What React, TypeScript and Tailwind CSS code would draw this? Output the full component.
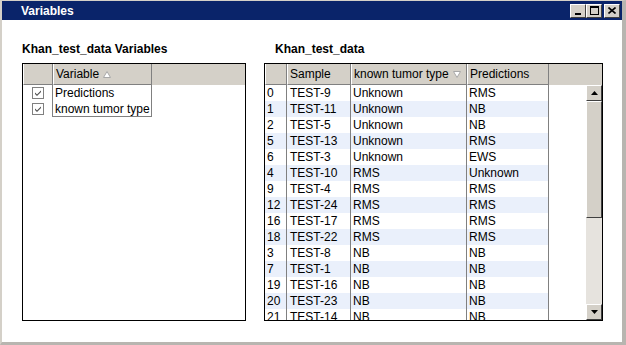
import React from "react";

const rows = [
  ["0", "TEST-9", "Unknown", "RMS"],
  ["1", "TEST-11", "Unknown", "NB"],
  ["2", "TEST-5", "Unknown", "NB"],
  ["5", "TEST-13", "Unknown", "RMS"],
  ["6", "TEST-3", "Unknown", "EWS"],
  ["4", "TEST-10", "RMS", "Unknown"],
  ["9", "TEST-4", "RMS", "RMS"],
  ["12", "TEST-24", "RMS", "RMS"],
  ["16", "TEST-17", "RMS", "RMS"],
  ["18", "TEST-22", "RMS", "RMS"],
  ["3", "TEST-8", "NB", "NB"],
  ["7", "TEST-1", "NB", "NB"],
  ["19", "TEST-16", "NB", "NB"],
  ["20", "TEST-23", "NB", "NB"],
  ["21", "TEST-14", "NB", "NB"],
];

const WinButton = ({ children, className }: { children: React.ReactNode; className?: string }) => (
  <div
    className={`flex h-[14px] w-[16px] items-center justify-center border border-t-white border-l-white border-r-[#404040] border-b-[#404040] bg-[#d4d0c8] ${className ?? ""}`}
  >
    {children}
  </div>
);

const Check = () => (
  <div className="flex h-[12px] w-[12px] items-center justify-center border border-[#808080] bg-white">
    <svg width="8" height="8" viewBox="0 0 8 8">
      <path d="M1 3.5 L3 5.5 L7 1.5 L7 3 L3 7 L1 5 Z" fill="#4a4a4a" />
    </svg>
  </div>
);

const HeadCell = ({ w, children }: { w: string; children?: React.ReactNode }) => (
  <div
    className={`${w} flex h-full shrink-0 items-center border-l border-l-white border-r border-r-[#808080] border-b border-b-[#808080] pl-[2px] text-[12px] text-black`}
  >
    {children}
  </div>
);

const ScrollBtn = ({ up }: { up?: boolean }) => (
  <div className="flex h-[16px] w-[16px] shrink-0 items-center justify-center border border-t-white border-l-white border-r-[#404040] border-b-[#404040] bg-[#d4d0c8]">
    <svg width="7" height="4" viewBox="0 0 7 4">
      {up ? <path d="M0 4 L3.5 0 L7 4 Z" fill="#000" /> : <path d="M0 0 L7 0 L3.5 4 Z" fill="#000" />}
    </svg>
  </div>
);

export default function App() {
  return (
    <div className="flex h-[345px] w-[626px] flex-col border-l-2 border-t border-r-[4px] border-b-[3px] border-l-[#d4d0c8] border-t-[#d4d0c8] border-r-[#b8b5b0] border-b-[#b8b5b0] bg-white font-['Liberation_Sans',Arial,sans-serif]">
      <div className="flex h-[19px] shrink-0 items-center justify-between bg-[#0a246a] pl-[19px] pr-[2px]">
        <span className="text-[12px] font-bold text-white">Variables</span>
        <div className="flex items-center">
          <WinButton>
            <svg width="8" height="8" viewBox="0 0 8 8">
              <rect x="1" y="6" width="6" height="2" fill="#000" />
            </svg>
          </WinButton>
          <WinButton>
            <svg width="9" height="9" viewBox="0 0 9 9">
              <rect x="0.5" y="0.5" width="8" height="8" fill="none" stroke="#000" />
              <rect x="0" y="0" width="9" height="2" fill="#000" />
            </svg>
          </WinButton>
          <WinButton className="ml-[2px]">
            <svg width="8" height="7" viewBox="0 0 8 7">
              <path d="M0.5 0.5 L7.5 6.5 M7.5 0.5 L0.5 6.5" stroke="#000" strokeWidth="1.6" />
            </svg>
          </WinButton>
        </div>
      </div>

      <div className="flex flex-1 pl-[20px] pt-[22px]">
        {/* left panel */}
        <div className="flex w-[224px] flex-col">
          <div className="h-[21px] text-[12px] font-bold leading-[14px] text-black">Khan_test_data Variables</div>
          <div className="flex h-[258px] flex-col border border-black">
            <div className="flex h-[21px] shrink-0 bg-[#d4d0c8]">
              <HeadCell w="w-[30px]" />
              <HeadCell w="w-[99px]">
                <span>Variable</span>
                <svg className="ml-[4px]" width="8" height="7" viewBox="0 0 8 7">
                  <path d="M0.5 6.5 L4 0.5 L7.5 6.5 Z" fill="#fff" stroke="#a8a8a8" />
                </svg>
              </HeadCell>
            </div>
            {["Predictions", "known tumor type"].map((v, i) => (
              <div key={v} className="flex h-[16px] shrink-0">
                <div className="flex w-[30px] items-center justify-center border-r border-[#808080]">
                  <Check />
                </div>
                <div
                  className={`flex w-[99px] items-center border-r border-[#808080] pl-[2px] text-[12px] leading-[16px] text-black ${i === 1 ? "border-b" : ""}`}
                >
                  {v}
                </div>
              </div>
            ))}
          </div>
        </div>

        {/* right panel */}
        <div className="ml-[18px] flex w-[339px] flex-col">
          <div className="ml-[11px] h-[21px] text-[12px] font-bold leading-[14px] text-black">Khan_test_data</div>
          <div className="flex h-[258px] flex-col border border-black">
            <div className="flex h-[21px] shrink-0 bg-[#d4d0c8]">
              <HeadCell w="w-[22px]" />
              <HeadCell w="w-[64px]">Sample</HeadCell>
              <HeadCell w="w-[116px]">
                <span>known tumor type</span>
                <svg className="ml-[4px]" width="8" height="7" viewBox="0 0 8 7">
                  <path d="M0.5 0.5 L7.5 0.5 L4 6.5 Z" fill="#fff" stroke="#a8a8a8" />
                </svg>
              </HeadCell>
              <HeadCell w="w-[82px]">Predictions</HeadCell>
            </div>
            <div className="flex min-h-0 flex-1">
              <div className="flex w-[284px] flex-col overflow-hidden">
                {rows.map((r, i) => (
                  <div
                    key={r[0]}
                    className={`flex h-[16px] shrink-0 text-[12px] leading-[16px] text-black ${i % 2 === 1 ? "bg-[#eaf0fb]" : "bg-white"}`}
                  >
                    <div className="w-[22px] shrink-0 border-r border-[#808080] pl-[2px]">{r[0]}</div>
                    <div className="w-[64px] shrink-0 border-r border-[#808080] pl-[3px]">{r[1]}</div>
                    <div className="w-[116px] shrink-0 border-r border-[#808080] pl-[2px]">{r[2]}</div>
                    <div className="w-[82px] shrink-0 border-r border-[#808080] pl-[2px]">{r[3]}</div>
                  </div>
                ))}
              </div>
              <div className="flex-1" />
              <div className="flex w-[16px] flex-col">
                <ScrollBtn up />
                <div className="h-[117px] shrink-0 border border-t-white border-l-white border-r-[#404040] border-b-[#404040] bg-[#d4d0c8]" />
                <div className="flex-1 bg-[#e6e3de]" />
                <ScrollBtn />
              </div>
            </div>
          </div>
        </div>
      </div>
    </div>
  );
}
